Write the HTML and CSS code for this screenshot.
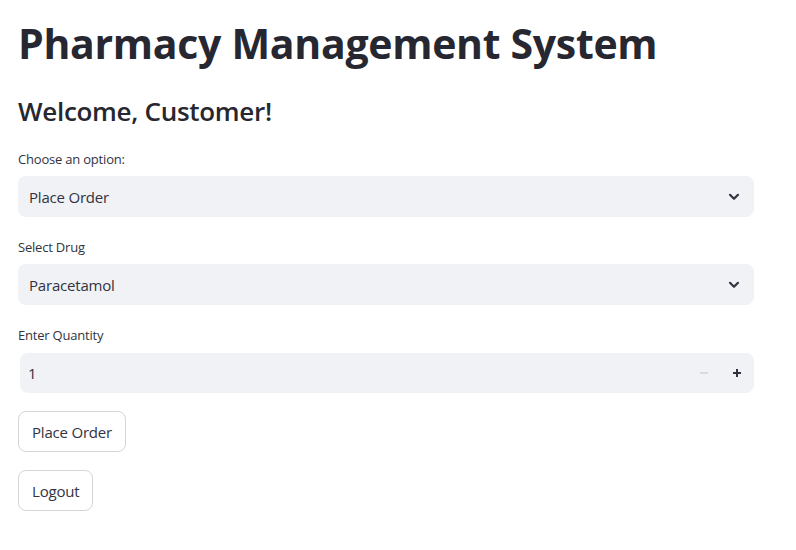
FILE: index.html
```html
<!DOCTYPE html>
<html>
<head>
<meta charset="utf-8">
<link rel="stylesheet" href="styles.css">
</head>
<body>
<main class="app">
  <h1 class="title">Pharmacy Management System</h1>
  <h2 class="subtitle">Welcome, Customer!</h2>

  <div class="field">
    <label class="label">Choose an option:</label>
    <div class="select">
      <span class="value">Place Order</span>
      <svg class="chev" width="12" height="8" viewBox="0 0 12 8"><path d="M2 1.8 L6 5.8 L10 1.8" fill="none" stroke="#31333f" stroke-width="2.2" stroke-linecap="round" stroke-linejoin="round"/></svg>
    </div>
  </div>

  <div class="field">
    <label class="label">Select Drug</label>
    <div class="select">
      <span class="value">Paracetamol</span>
      <svg class="chev" width="12" height="8" viewBox="0 0 12 8"><path d="M2 1.8 L6 5.8 L10 1.8" fill="none" stroke="#31333f" stroke-width="2.2" stroke-linecap="round" stroke-linejoin="round"/></svg>
    </div>
  </div>

  <div class="field">
    <label class="label">Enter Quantity</label>
    <div class="number">
      <span class="num-value">1</span>
      <span class="step minus">
        <svg width="10" height="10" viewBox="0 0 10 10"><path d="M1 5 H9" stroke="#d0d2d8" stroke-width="1.4"/></svg>
      </span>
      <span class="step plus">
        <svg width="10" height="10" viewBox="0 0 10 10"><path d="M1 5 H9 M5 1 V9" stroke="#31333f" stroke-width="2"/></svg>
      </span>
    </div>
  </div>

  <div class="buttons">
    <button class="btn">Place Order</button>
    <button class="btn">Logout</button>
  </div>
</main>
</body>
</html>
```

FILE: styles.css
```css
* { box-sizing: border-box; }
html, body { margin: 0; padding: 0; background: #ffffff; }
body {
  font-family: "Open Sans", "Noto Sans", sans-serif;
  color: #31333f;
}
.app {
  width: 736px;
  margin-left: 18px;
  padding-top: 14px;
  display: flex;
  flex-direction: column;
}
.title {
  margin: 0;
  font-size: 41px;
  font-weight: 700;
  letter-spacing: -0.3px;
  line-height: 58px;
  color: #262730;
}
.subtitle {
  margin: 22px 0 0 0;
  font-size: 26px;
  font-weight: 600;
  letter-spacing: -0.3px;
  line-height: 34px;
  color: #262730;
}
.field {
  display: flex;
  flex-direction: column;
  margin-top: 22px;
}
.field + .field { margin-top: 21px; }
.label {
  font-size: 13px;
  line-height: 18px;
  letter-spacing: -0.2px;
  color: #31333f;
  margin-bottom: 8px;
}
.number-label { margin-bottom: 9px; }
.select {
  height: 41px;
  background: #f0f2f6;
  border-radius: 8px;
  display: flex;
  align-items: center;
  justify-content: space-between;
  padding: 0 14px 0 11px;
}
.value {
  font-size: 15px;
  letter-spacing: -0.2px;
  color: #31333f;
}
.chev { display: block; }
.number {
  height: 40px;
  margin-left: 2px;
  margin-top: 1px;
  background: #f0f2f6;
  border-radius: 8px;
  display: flex;
  align-items: center;
  padding: 0 1px 0 8px;
}
.num-value {
  flex: 1;
  font-size: 15px;
  color: #31333f;
}
.step {
  width: 33px;
  height: 40px;
  display: flex;
  align-items: center;
  justify-content: center;
}
.step svg { display: block; }
.buttons {
  display: flex;
  flex-direction: column;
  align-items: flex-start;
  gap: 18px;
  margin-top: 18px;
}
.btn {
  font-family: "Open Sans", "Noto Sans", sans-serif;
  font-size: 15px;
  letter-spacing: -0.2px;
  color: #31333f;
  background: #ffffff;
  border: 1px solid #d3d5da;
  border-radius: 8px;
  height: 41px;
  padding: 0 13px;
  cursor: pointer;
}
```
